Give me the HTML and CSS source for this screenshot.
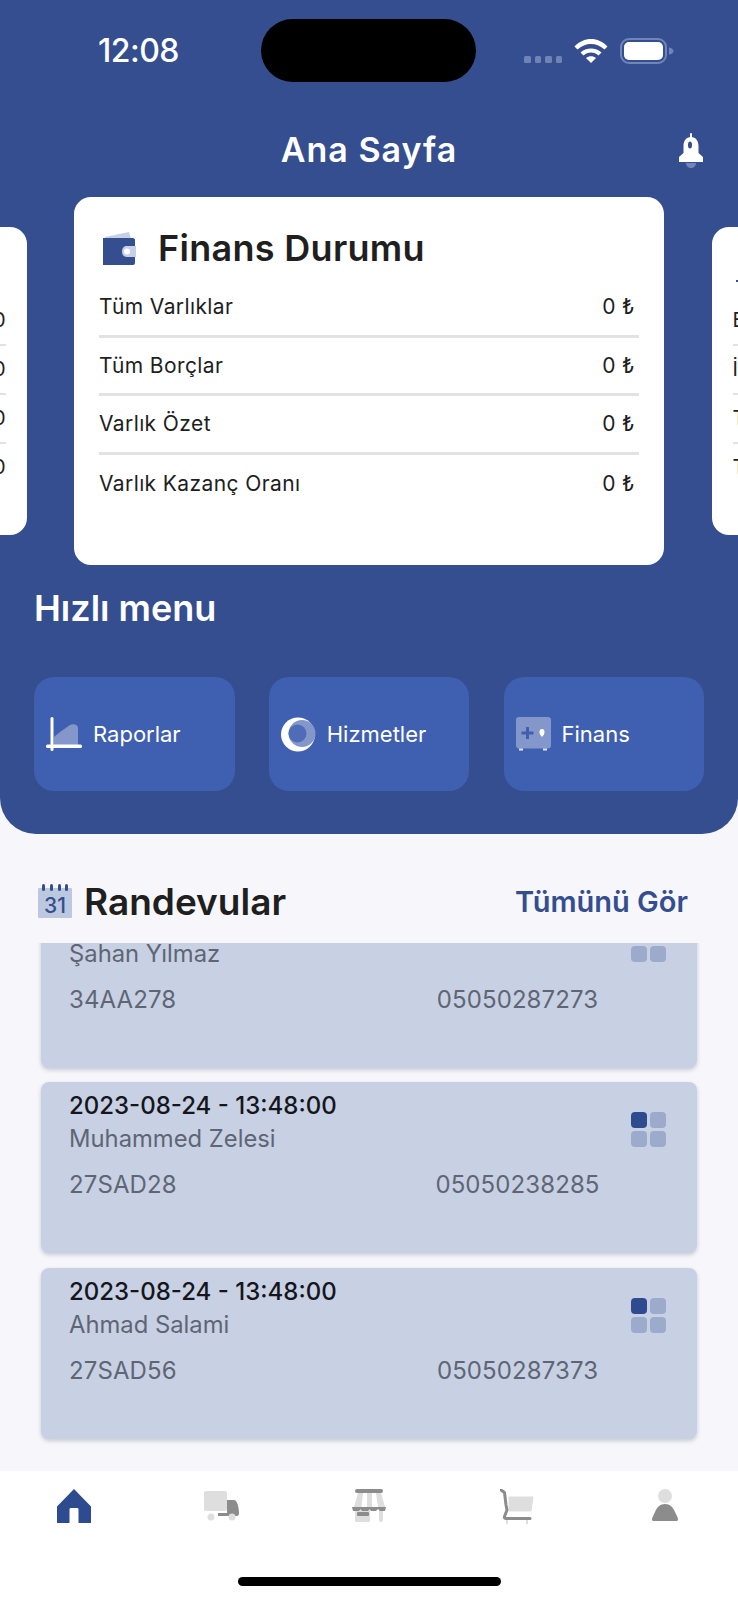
FILE: index.html
```html
<!DOCTYPE html>
<html lang="tr">
<head>
<meta charset="utf-8">
<title>Ana Sayfa</title>
<link rel="stylesheet" href="styles.css">
</head>
<body>
<div class="app">
  <header class="hero">
    <div class="status">
      <span class="time">12:08</span>
      <span class="island"></span>
      <div class="status-icons">
        <span class="dots"><i></i><i></i><i></i><i></i></span>
        <svg class="wifi" width="34" height="25" viewBox="0 0 34 25"><path d="M0.5 8.5C9.5 -1.5 24.5 -1.5 33.5 8.5L30.5 11.5C23 4 11 4 3.5 11.5Z" fill="#fff"/><path d="M6.5 14.5C12 9 22 9 27.5 14.5L24.5 17.5C20.5 13.5 13.5 13.5 9.5 17.5Z" fill="#fff"/><path d="M12 20C15 17.5 19 17.5 22 20L17 25Z" fill="#fff"/></svg>
        <svg class="battery" width="54" height="26" viewBox="0 0 54 26"><rect x="1" y="1" width="45" height="24" rx="8" fill="none" stroke="#7186b8" stroke-width="2"/><rect x="4" y="4" width="39" height="18" rx="5" fill="#fff"/><path d="M49 9.500C52 10 53.500 11.500 53.500 13C53.500 14.500 52 16 49 16.500Z" fill="#7186b8"/></svg>
      </div>
    </div>

    <div class="titlebar">
      <span></span>
      <h1 class="page-title">Ana Sayfa</h1>
      <svg class="bell" width="26" height="35" viewBox="0 0 26 35"><rect x="12" y="0" width="2" height="6" rx="1" fill="#fff"/><path d="M13 4C18 4 20.500 8 20.500 13V20L25 24V29H1V24L5.500 20V13C5.500 8 8 4 13 4Z" fill="#fff"/><path d="M8 30H18C18 33 15.500 35 13 35C10.500 35 8 33 8 30Z" fill="#7186b8"/><ellipse cx="12" cy="12" rx="2" ry="3.500" fill="#344e8f"/></svg>
    </div>

    <div class="carousel">
      <section class="card card-side">
        <div class="side-rows side-rows-left">
          <span>0</span><hr><span>0</span><hr><span>0</span><hr><span>0</span>
        </div>
      </section>
      <section class="card card-main">
        <div class="card-head">
          <svg width="35" height="34" viewBox="0 0 35 34"><path d="M3 6L27 1L29 8H3Z" fill="#c5cfe6"/><path d="M1 7H31C32 7 33 8 33 9V32C33 33 32 34 31 34H1Z" fill="#344e8f"/><path d="M25 15H34V26H25C22 26 20 24 20 20.500C20 17 22 15 25 15Z" fill="#c5cfe6"/><circle cx="25" cy="20.500" r="3" fill="#fff"/></svg>
          <h2 class="card-title">Finans Durumu</h2>
        </div>
        <div class="row"><span>Tüm Varlıklar</span><span class="val">0 ₺</span></div>
        <div class="row"><span>Tüm Borçlar</span><span class="val">0 ₺</span></div>
        <div class="row"><span>Varlık Özet</span><span class="val">0 ₺</span></div>
        <div class="row"><span>Varlık Kazanç Oranı</span><span class="val">0 ₺</span></div>
      </section>
      <section class="card card-side card-side-right">
        <i class="side-mark"></i>
        <div class="side-rows">
          <span>E</span><hr><span>İ</span><hr><span>T</span><hr><span>T</span>
        </div>
      </section>
    </div>

    <h2 class="quick-title">Hızlı menu</h2>

    <nav class="quick">
      <a class="quick-btn">
        <svg width="36" height="34" viewBox="0 0 36 34"><path d="M8 20L14 15L24 8C28 6 32 8 32 11V29H8Z" fill="#8497cb"/><rect x="4.500" y="0" width="3" height="34" rx="1.500" fill="#fff"/><rect x="0" y="27.500" width="36" height="3.500" rx="1.500" fill="#fff"/></svg>
        <span>Raporlar</span>
      </a>
      <a class="quick-btn">
        <svg width="35" height="35" viewBox="0 0 35 35"><circle cx="17" cy="17.500" r="17" fill="#fff"/><ellipse cx="21" cy="16.500" rx="13.500" ry="13.500" fill="#8497cb"/><circle cx="16.500" cy="16.500" r="9" fill="#4f6cb8"/></svg>
        <span>Hizmetler</span>
      </a>
      <a class="quick-btn">
        <svg width="35" height="34" viewBox="0 0 35 34"><rect x="0" y="0" width="35" height="31.500" rx="3" fill="#8497cb"/><rect x="3" y="31.500" width="4" height="2" fill="#dfe5f3"/><rect x="27" y="31.500" width="4" height="2" fill="#dfe5f3"/><path d="M10 10H13V14.500H17.500V17.500H13V22H10V17.500H5.500V14.500H10Z" fill="#3f60b0"/><path d="M26 12C28 12 28.500 13.500 28.500 15C28.500 17 27.500 18.500 26 20C24.500 18.500 23.500 17 23.500 15C23.500 13.500 24 12 26 12Z" fill="#fff"/></svg>
        <span>Finans</span>
      </a>
    </nav>
  </header>

  <div class="section-head">
    <div class="section-left">
      <svg width="34" height="34" viewBox="0 0 34 34"><rect x="0" y="4" width="34" height="30" rx="1" fill="#bcc8df"/><rect x="4" y="0" width="3" height="7" rx="1.500" fill="#344e8f"/><rect x="12" y="0" width="3" height="7" rx="1.500" fill="#344e8f"/><rect x="20" y="0" width="3" height="7" rx="1.500" fill="#344e8f"/><rect x="27" y="0" width="3" height="7" rx="1.500" fill="#344e8f"/><text class="cal-num" x="17" y="29" text-anchor="middle">31</text></svg>
      <h2 class="section-title">Randevular</h2>
    </div>
    <a class="see-all">Tümünü Gör</a>
  </div>

  <div class="list">
    <article class="appt">
      <div class="appt-top">
        <div>
          <p class="appt-date"></p>
          <p class="appt-name">Şahan Yılmaz</p>
        </div>
        <div class="squares"><i class="on"></i><i></i><i></i><i></i></div>
      </div>
      <div class="appt-bottom"><span class="plate">34AA278</span><span class="phone">05050287273</span></div>
    </article>
    <article class="appt">
      <div class="appt-top">
        <div>
          <p class="appt-date">2023-08-24 - 13:48:00</p>
          <p class="appt-name">Muhammed Zelesi</p>
        </div>
        <div class="squares"><i class="on"></i><i></i><i></i><i></i></div>
      </div>
      <div class="appt-bottom"><span class="plate">27SAD28</span><span class="phone">05050238285</span></div>
    </article>
    <article class="appt">
      <div class="appt-top">
        <div>
          <p class="appt-date">2023-08-24 - 13:48:00</p>
          <p class="appt-name">Ahmad Salami</p>
        </div>
        <div class="squares"><i class="on"></i><i></i><i></i><i></i></div>
      </div>
      <div class="appt-bottom"><span class="plate">27SAD56</span><span class="phone">05050287373</span></div>
    </article>
  </div>

  <footer class="tabbar">
    <div class="tabs">
      <svg width="36" height="34" viewBox="0 0 36 34"><path d="M18 0L35 17.500V34H22.500V20.500C22.500 19.500 22 19 21 19H15C14 19 13.500 19.500 13.500 20.500V34H1V17.500Z" fill="#2f4b90"/></svg>
      <svg width="36" height="34" viewBox="0 0 36 34"><rect x="0" y="2" width="23" height="20" rx="2" fill="#dedede"/><path d="M23 11H30C33 11 35 18 35 24C35 26 34 27 33 27H14V24H23Z" fill="#8c8c8c"/><circle cx="7" cy="28" r="3.500" fill="#dedede"/><circle cx="28" cy="28" r="3.500" fill="#dedede"/></svg>
      <svg width="36" height="34" viewBox="0 0 36 34"><rect x="3" y="18" width="15" height="15" rx="1" fill="#dedede"/><rect x="27" y="18" width="4" height="15" rx="2" fill="#dedede"/><path d="M6 4H11L9.500 18H2Z" fill="#dedede"/><path d="M15 4H20V18H15Z" fill="#dedede"/><path d="M24 4H29L33 18H26Z" fill="#dedede"/><rect x="3" y="0" width="28" height="4" rx="2" fill="#8c8c8c"/><path d="M0 18H34L33 22H28L26 20L24 22H19L17.500 20L16 22H10L8.500 20L7 22H1Z" fill="#8c8c8c"/><rect x="5" y="23" width="12" height="4" rx="1" fill="#8c8c8c"/></svg>
      <svg width="40" height="36" viewBox="0 0 40 36"><path d="M9 8H33L31 22H9Z" fill="#dedede" stroke="#dedede" stroke-linejoin="round"/><rect x="6" y="31" width="2" height="4" fill="#dedede"/><rect x="26" y="31" width="2" height="4" fill="#dedede"/><path d="M1 1L4.500 3.500L6 16L7 21L4.500 27.500C4 29 5 29.500 6 29.500H30" fill="none" stroke="#8c8c8c" stroke-width="3" stroke-linecap="round" stroke-linejoin="round"/></svg>
      <svg width="26" height="33" viewBox="0 0 26 33"><ellipse cx="13" cy="7" rx="7" ry="7" fill="#dedede"/><path d="M13 15C18 15 21 18 23 23C25 27 26 29 26 30.500C26 32 25 32 24 32H2C1 32 0 32 0 30.500C0 29 1 27 3 23C5 18 8 15 13 15Z" fill="#8c8c8c"/></svg>
    </div>
    <span class="home-bar"></span>
  </footer>
</div>
</body>
</html>
```

FILE: styles.css
```css
* { box-sizing: border-box; }
html, body { margin: 0; padding: 0; }
body {
  width: 738px;
  height: 1600px;
  overflow: hidden;
  font-family: "Inter", "Noto Sans", sans-serif;
  background: #f7f7fb;
}
.app { display: flex; flex-direction: column; height: 1600px; }
h1, h2, p { margin: 0; }

.hero {
  background: #344e8f;
  border-radius: 0 0 36px 36px;
  height: 834px;
  padding-top: 19px;
  overflow: hidden;
  flex: none;
}

.status { display: flex; align-items: center; height: 63px; padding-left: 98px; }
.time { width: 163px; color: #fff; font-size: 32px; font-weight: 500; letter-spacing: -0.5px; }
.island { width: 215px; height: 63px; border-radius: 32px; background: #000; }
.status-icons { display: flex; align-items: flex-start; margin-left: 48px; height: 26px; margin-top: 1px; }
.dots { display: flex; gap: 4px; margin-top: 18px; }
.dots i { width: 6.500px; height: 6.500px; border-radius: 1.500px; background: #6f84b5; }
.wifi { margin-left: 12px; }
.battery { margin-left: 12px; }

.titlebar {
  display: grid;
  grid-template-columns: 1fr auto 1fr;
  align-items: center;
  height: 50px;
  margin-top: 43px;
  padding-right: 34px;
  padding-left: 34px;
}
.page-title { color: #fff; font-size: 34px; font-weight: 600; letter-spacing: 1px; line-height: 50px; }
.bell { justify-self: end; }

.carousel {
  display: flex;
  align-items: center;
  justify-content: center;
  gap: 47.500px;
  margin-top: 22px;
  height: 368px;
}
.card { background: #fff; border-radius: 17px; flex: none; }
.card-main { width: 590px; height: 368px; padding: 34px 25px 0 25px; }
.card-side { width: 590px; height: 308px; color: #1e1e1e; padding: 79px 21px 0 21px; }
.card-side-right { padding-top: 53px; }
.side-mark { display: block; width: 6px; height: 2px; margin: 0 0 24px 3px; background: #344e8f; }
.side-rows { display: flex; flex-direction: column; }
.side-rows span { height: 28px; line-height: 28px; font-size: 20px; }
.side-rows hr { width: 100%; margin: 9.500px 0; border: 0; height: 2px; background: #e2e2e2; }
.side-rows-left { align-items: flex-end; }

.card-head { display: flex; align-items: center; gap: 21px; height: 34px; padding-left: 3px; }
.card-title { color: #1f1f1f; font-size: 36px; font-weight: 600; letter-spacing: 0.3px; white-space: nowrap; }

.row {
  display: flex;
  justify-content: space-between;
  align-items: center;
  height: 58.500px;
  padding: 0 4px 0 0;
  font-size: 21px;
  letter-spacing: 0.4px;
  color: #1e1e1e;
  border-bottom: 3px solid #e2e2e2;
}
.card-head + .row { margin-top: 14px; }
.row:last-child { border-bottom: 0; }

.quick-title { color: #fff; font-size: 36px; font-weight: 600; line-height: 46px; margin: 20px 0 0 34px; }

.quick { display: flex; justify-content: space-between; margin-top: 46px; padding: 0 34px; }
.quick-btn {
  display: flex;
  align-items: center;
  gap: 11px;
  width: 200.500px;
  height: 114px;
  padding-left: 12px;
  border-radius: 20px;
  background: #3f60b0;
  color: #fff;
  font-size: 22px;
  font-weight: 400;
}

.section-head {
  display: flex;
  justify-content: space-between;
  align-items: center;
  height: 34px;
  margin-top: 50px;
  padding: 0 50px 0 38px;
  flex: none;
}
.section-left { display: flex; align-items: center; gap: 12px; }
.section-title { color: #1f1f1f; font-size: 37px; font-weight: 600; }
.see-all { color: #344e8f; font-size: 29px; font-weight: 600; }
.cal-num { fill: #344e8f; font-family: "Inter", sans-serif; font-size: 21px; font-weight: 500; }

.list { flex: 1; margin-top: 25px; overflow: hidden; padding: 0 41px; }
.appt {
  height: 171px;
  margin-bottom: 15px;
  padding: 9px 31px 0 28px;
  background: #c8d1e3;
  border-radius: 8px;
  box-shadow: 0 2px 4px rgba(60, 70, 100, 0.25);
}
.appt:first-child { margin-top: -46px; margin-bottom: 14px; }
.appt-top { display: flex; justify-content: space-between; align-items: flex-start; }
.appt-date { color: #14161c; font-size: 24px; font-weight: 500; line-height: 30px; min-height: 30px; }
.appt-name { color: #5e6675; font-size: 23.800px; line-height: 34px; margin-top: 1px; }
.squares { display: grid; grid-template-columns: 16px 16px; grid-auto-rows: 16px; gap: 3px; margin-top: 21px; }
.squares i { background: #9cabcb; border-radius: 4px; }
.squares i.on { background: #2f4b90; }
.appt-bottom { display: flex; margin-top: 12px; color: #5e6675; font-size: 24px; letter-spacing: 0.1px; line-height: 34px; }
.plate { width: 303px; }
.phone { width: 300px; text-align: center; }

.tabbar { flex: none; height: 129px; background: #fff; display: flex; flex-direction: column; align-items: center; }
.tabs { display: flex; gap: 112px; align-items: flex-start; width: 100%; height: 106px; padding: 18px 0 0 56px; }
.home-bar { width: 263px; height: 9px; border-radius: 5px; background: #000; }
```
